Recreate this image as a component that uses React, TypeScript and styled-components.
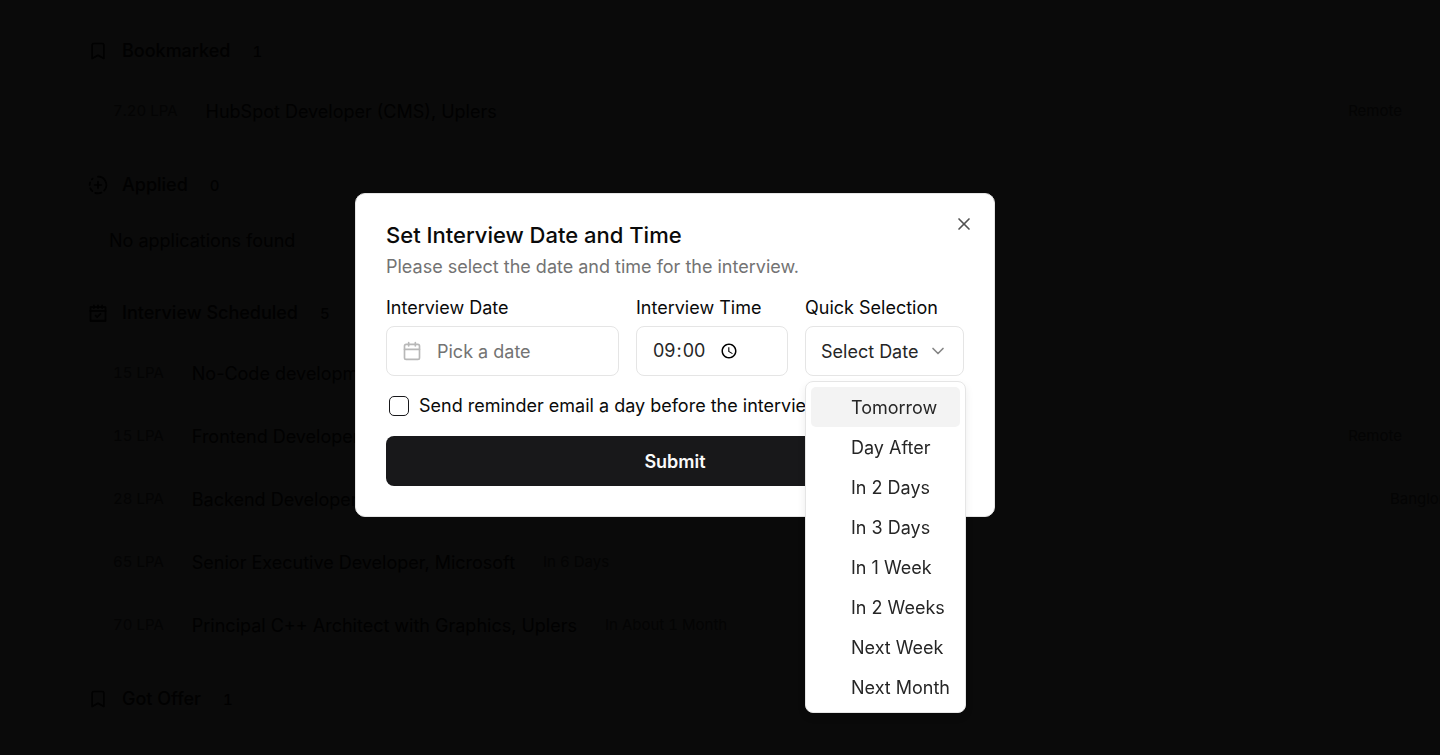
import React from 'react';
import styled, { createGlobalStyle } from 'styled-components';
import { X, ChevronDown, Calendar, Bookmark, CircleFadingPlus } from 'lucide-react';

const GlobalStyle = createGlobalStyle`
  * { box-sizing: border-box; }
  body {
    margin: 0;
    background: #0a0a0a;
    color: #010101;
    font-family: Inter, "Liberation Sans", sans-serif;
    overflow: hidden;
  }
  button, input, select { font: inherit; color: inherit; }
`;

const Board = styled.main`
  display: flex;
  flex-direction: column;
  gap: 13px;
  min-height: 100vh;
  padding: 22px 38px 0 88px;
  overflow: hidden;
`;

const SectionHeader = styled.header`
  display: flex;
  align-items: center;
  height: 58px;
  svg { margin-right: 14px; }
`;

const SectionTitle = styled.h2`
  margin: 0 22px 0 0;
  font-size: 18px;
  line-height: 24px;
  font-weight: 500;
`;

const Count = styled.span`
  font-size: 15px;
  font-weight: 500;
  font-variant-numeric: tabular-nums;
`;

const List = styled.ul`
  list-style: none;
  margin: 0;
  padding: 0 0 0 25px;
`;

const Row = styled.li`
  display: flex;
  align-items: center;
  gap: 28px;
  height: 63px;
  white-space: nowrap;
`;

const Tag = styled.span`
  padding-bottom: 2px;
  font-size: 15px;
  line-height: 20px;
  font-variant-numeric: tabular-nums;
  color: #040404;
`;

const Place = styled(Tag)<{ $spill: number }>`
  margin-left: auto;
  margin-right: -${(p) => p.$spill}px;
`;

const JobTitle = styled.span`
  font-size: 18px;
  line-height: 24px;
`;

const Empty = styled.p`
  margin: 0;
  padding: 0 0 3px 21px;
  font-size: 18px;
  line-height: 54px;
`;

const Overlay = styled.div`
  position: fixed;
  inset: 0;
  display: flex;
  align-items: center;
  justify-content: center;
  padding: 0 90px 45px 0;
`;

const Dialog = styled.section`
  position: relative;
  display: flex;
  flex-direction: column;
  gap: 18px;
  width: 100%;
  max-width: 640px;
  padding: 30px;
  border: 1px solid #e5e5e5;
  border-radius: 10px;
  background: #fff;
  color: #0a0a0a;
  font-size: 18px;
  line-height: 24px;
`;

const DialogTitle = styled.h1`
  margin: 0 0 10px;
  font-size: 22px;
  line-height: 22px;
  font-weight: 500;
`;

const Description = styled.p`
  margin: 0;
  line-height: 22px;
  color: #737373;
`;

const CloseButton = styled.button`
  position: absolute;
  top: 20px;
  right: 20px;
  display: flex;
  padding: 0;
  border: 0;
  background: none;
  && { color: #525252; }
`;

const Fields = styled.div`
  display: flex;
  gap: 17px;
`;

const Field = styled.div<{ $width?: number }>`
  position: relative;
  display: flex;
  flex-direction: column;
  gap: 6px;
  flex: ${(p) => (p.$width ? `0 0 ${p.$width}px` : '1 1 0')};
`;

const controlStyle = `
  width: 100%;
  height: 50px;
  border: 1px solid #e5e5e5;
  border-radius: 8px;
  background: #fff;
`;

const DateButton = styled.button`
  ${controlStyle}
  display: flex;
  align-items: center;
  gap: 15px;
  padding: 0 15px;
  && { color: #737373; }
  svg { color: #b8b8b8; }
  span { padding-top: 2px; }
`;

const TimeInput = styled.input`
  ${controlStyle}
  padding: 0 15px;
  && { color: #262626; }
  &::-webkit-datetime-edit-ampm-field { display: none; }
  &::-webkit-datetime-edit { flex: 0 0 65px; min-width: 0; }
  &::-webkit-calendar-picker-indicator { margin-left: 0; }
`;

const SelectBox = styled.div`
  position: relative;
  svg {
    position: absolute;
    right: 16px;
    top: 15px;
    color: #858585;
    pointer-events: none;
  }
`;

const Select = styled.select`
  ${controlStyle}
  appearance: none;
  display: block;
  padding: 2px 15px 0;
  && { color: #262626; }
`;

const Menu = styled.ul`
  position: absolute;
  top: 100%;
  left: 0;
  z-index: 1;
  width: 161px;
  margin: 5px 0 0;
  padding: 5px;
  list-style: none;
  border: 1px solid #e5e5e5;
  border-radius: 8px;
  background: #fff;
  color: #262626;
  box-shadow: 0 4px 8px rgba(0, 0, 0, 0.08);
`;

const MenuItem = styled.li<{ $active: boolean }>`
  padding: 2px 0 0 40px;
  border-radius: 5px;
  line-height: 38px;
  white-space: nowrap;
  background: ${(p) => (p.$active ? '#f3f3f3' : 'transparent')};
`;

const Reminder = styled.label`
  display: flex;
  align-items: center;
  gap: 10px;
  padding-left: 3px;
  white-space: nowrap;
`;

const Checkbox = styled.input`
  appearance: none;
  width: 20px;
  height: 20px;
  margin: 0;
  border: 1px solid #18181b;
  border-radius: 5px;
  background: #fff;
`;

const Submit = styled.button`
  height: 50px;
  padding: 2px 0 0;
  border: 0;
  border-radius: 8px;
  background: #18181a;
  && { color: #fafafa; font-weight: 600; }
`;

function ScheduleIcon() {
  return (
    <svg width="20" height="20" viewBox="0 0 24 24" fill="none" stroke="currentColor" strokeWidth="2" aria-hidden="true">
      <path d="M3 5h18v16.5H3z" strokeLinejoin="round" />
      <path d="M2 9.5h20M7 2v5M12 2v5M17 2v5M3 21h18" />
      <path d="M8.5 14.5l2.5 2.5 4.5-4.5" />
    </svg>
  );
}

type Job = { pay: string; title: string; due?: string; place?: string; spill?: number };
type Stage = { name: string; icon: React.ReactNode; jobs: Job[] };

const stages: Stage[] = [
  {
    name: 'Bookmarked',
    icon: <Bookmark size={20} />,
    jobs: [{ pay: '7.20 LPA', title: 'HubSpot Developer (CMS), Uplers', place: 'Remote' }],
  },
  { name: 'Applied', icon: <CircleFadingPlus size={20} />, jobs: [] },
  {
    name: 'Interview Scheduled',
    icon: <ScheduleIcon />,
    jobs: [
      { pay: '15 LPA', title: 'No-Code development' },
      { pay: '15 LPA', title: 'Frontend Developer', place: 'Remote' },
      { pay: '28 LPA', title: 'Backend Developer', place: 'Banglore', spill: 51 },
      { pay: '65 LPA', title: 'Senior Executive Developer, Microsoft', due: 'In 6 Days' },
      { pay: '70 LPA', title: 'Principal C++ Architect with Graphics, Uplers', due: 'In About 1 Month' },
    ],
  },
];

const choices = ['Tomorrow', 'Day After', 'In 2 Days', 'In 3 Days', 'In 1 Week', 'In 2 Weeks', 'Next Week', 'Next Month'];

function StageHeader({ name, icon, count }: { name: string; icon: React.ReactNode; count: number }) {
  return (
    <SectionHeader>
      {icon}
      <SectionTitle>{name}</SectionTitle>
      <Count>{count}</Count>
    </SectionHeader>
  );
}

export default function App() {
  return (
    <>
      <GlobalStyle />
      <Board>
        {stages.map((stage) => (
          <section key={stage.name}>
            <StageHeader name={stage.name} icon={stage.icon} count={stage.jobs.length} />
            {stage.jobs.length === 0 && <Empty>No applications found</Empty>}
            {stage.jobs.length > 0 && (
              <List>
                {stage.jobs.map((job) => (
                  <Row key={job.title}>
                    <Tag>{job.pay}</Tag>
                    <JobTitle>{job.title}</JobTitle>
                    {job.due && <Tag>{job.due}</Tag>}
                    {job.place && <Place $spill={job.spill ?? 0}>{job.place}</Place>}
                  </Row>
                ))}
              </List>
            )}
          </section>
        ))}
        <section>
          <StageHeader name="Got Offer" icon={<Bookmark size={20} />} count={1} />
        </section>
      </Board>
      <Overlay>
        <Dialog role="dialog" aria-modal="true" aria-labelledby="dialog-title">
          <CloseButton type="button" aria-label="Close">
            <X size={20} />
          </CloseButton>
          <div>
            <DialogTitle id="dialog-title">Set Interview Date and Time</DialogTitle>
            <Description>Please select the date and time for the interview.</Description>
          </div>
          <Fields>
            <Field>
              <label htmlFor="date">Interview Date</label>
              <DateButton id="date" type="button">
                <Calendar size={20} />
                <span>Pick a date</span>
              </DateButton>
            </Field>
            <Field $width={152}>
              <label htmlFor="time">Interview Time</label>
              <TimeInput id="time" type="time" defaultValue="09:00" />
            </Field>
            <Field $width={159}>
              <label htmlFor="quick">Quick Selection</label>
              <SelectBox>
                <Select id="quick" defaultValue="">
                  <option value="">Select Date</option>
                  {choices.map((choice) => (
                    <option key={choice}>{choice}</option>
                  ))}
                </Select>
                <ChevronDown size={20} />
              </SelectBox>
              <Menu role="listbox" aria-label="Quick Selection">
                {choices.map((choice, i) => (
                  <MenuItem key={choice} role="option" aria-selected={i === 0} $active={i === 0}>
                    {choice}
                  </MenuItem>
                ))}
              </Menu>
            </Field>
          </Fields>
          <Reminder>
            <Checkbox type="checkbox" />
            Send reminder email a day before the interview
          </Reminder>
          <Submit type="button">Submit</Submit>
        </Dialog>
      </Overlay>
    </>
  );
}
